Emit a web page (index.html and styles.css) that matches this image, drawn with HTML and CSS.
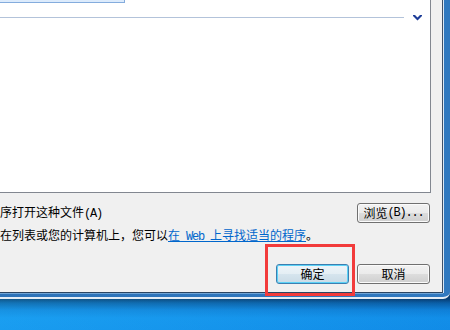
FILE: index.html
```html
<!DOCTYPE html>
<html lang="zh-CN">
<head>
    <meta charset="UTF-8">
    <title>打开方式</title>
    <link rel="stylesheet" href="styles.css">
</head>
<body>
    <div class="window">
        <div class="client">
            <div class="panel">
                <div class="selected-item"></div>
                <div class="group-row">
                    <div class="group-line"></div>
                    <svg class="chevron" width="9" height="6" viewBox="0 0 9 6">
                        <polygon points="0,0 2,0 4.5,2.5 7,0 9,0 9,1 4.5,5.5 0,1" fill="#1d3d98"/>
                    </svg>
                </div>
            </div>

            <div class="option-row">
                <label class="option-text">序打开这种文件<span class="latin">(A)</span></label>
                <button class="button">浏览<span class="latin">(B)...</span></button>
            </div>

            <div class="hint-row">
                在列表或您的计算机上，您可以<a href="#" class="link">在<span class="latin"> Web </span>上寻找适当的程序</a>。
            </div>

            <div class="button-row">
                <button class="button default-button">确定</button>
                <button class="button">取消</button>
            </div>
        </div>
    </div>

    <!-- annotation drawn over the screenshot -->
    <div class="highlight"></div>
</body>
</html>
```

FILE: styles.css
```css
* {
    margin: 0;
    padding: 0;
    box-sizing: border-box;
}

body {
    width: 450px;
    height: 330px;
    overflow: hidden;
    position: relative;
    font-family: "Noto Sans CJK SC", "Liberation Sans", sans-serif;
    font-size: 12px;
    color: #000;
    background:
        linear-gradient(to right, rgba(40, 180, 255, 0.25), rgba(0, 90, 210, 0.15)),
        linear-gradient(to bottom, #0a3963 299px, #0c5e9e 303px, #1286d8 310px, #1597ec 318px, #1494ea 330px);
}

/* half-width latin, like the system font */
.latin {
    font-family: "Liberation Mono", monospace;
    font-size: 12px;
    letter-spacing: -1.2px;
}

/* Window frame */
.window {
    display: flex;
    flex-direction: column;
    width: 450px;
    height: 299px;
    padding: 0 7px 4px 0;
    background: linear-gradient(to right, #2c72b8, #2f78bf);
    border-bottom: 2px solid #e4edf6;
    border-radius: 0 0 7px 0;
}

.client {
    flex: 1;
    display: flex;
    flex-direction: column;
    background: #f0f0f0;
    border-right: 1px solid #3e5068;
    border-bottom: 1px solid #2a4461;
    box-shadow: 1px 0 0 #dbe7f3, 0 1px 0 #6fa4d6;
    padding-right: 12px;
}

/* Program list */
.panel {
    height: 193px;
    width: 431px;
    background: #ffffff;
    border-right: 1px solid #828790;
    border-bottom: 1px solid #828790;
}

.selected-item {
    width: 125px;
    height: 3px;
    background: #dcebfc;
    border-right: 1px solid #84acdd;
    border-bottom: 1px solid #84acdd;
}

.group-row {
    display: flex;
    align-items: center;
    margin-top: 11px;
    height: 6px;
}

.group-line {
    width: 404px;
    height: 1px;
    background: #b3c3da;
}

.chevron {
    margin-left: 9px;
    margin-top: 1px;
}

/* Options */
.option-row {
    display: flex;
    justify-content: space-between;
    align-items: center;
    height: 20px;
    margin-top: 10px;
}

.option-text {
    padding-bottom: 3px;
}

.hint-row {
    height: 20px;
    line-height: 18px;
    margin-top: 3px;
    white-space: nowrap;
}

.link {
    color: #0066cc;
    text-decoration: underline;
}

.button-row {
    display: flex;
    justify-content: flex-end;
    gap: 8px;
    margin-top: 18px;
}

/* Buttons */
.button {
    width: 73px;
    height: 20px;
    font-family: inherit;
    font-size: 12px;
    color: #000;
    border: 1px solid #707070;
    border-radius: 3px;
    background: linear-gradient(#f2f2f2 0%, #ebebeb 50%, #dddddd 50%, #cfcfcf 100%);
    box-shadow: inset 0 0 0 1px #fbfbfb;
    display: flex;
    align-items: center;
    justify-content: center;
    padding-bottom: 1px;
}

.default-button {
    border-color: #3c7fb1;
    background: linear-gradient(#eef5f9 0%, #e4eef4 50%, #d6e5ee 50%, #cadbe6 100%);
    box-shadow: inset 0 0 0 1px #5cd2f6;
}

/* Red annotation box */
.highlight {
    position: absolute;
    left: 265px;
    top: 244px;
    width: 90px;
    height: 52px;
    border: 3px solid #f23b3b;
}
```
